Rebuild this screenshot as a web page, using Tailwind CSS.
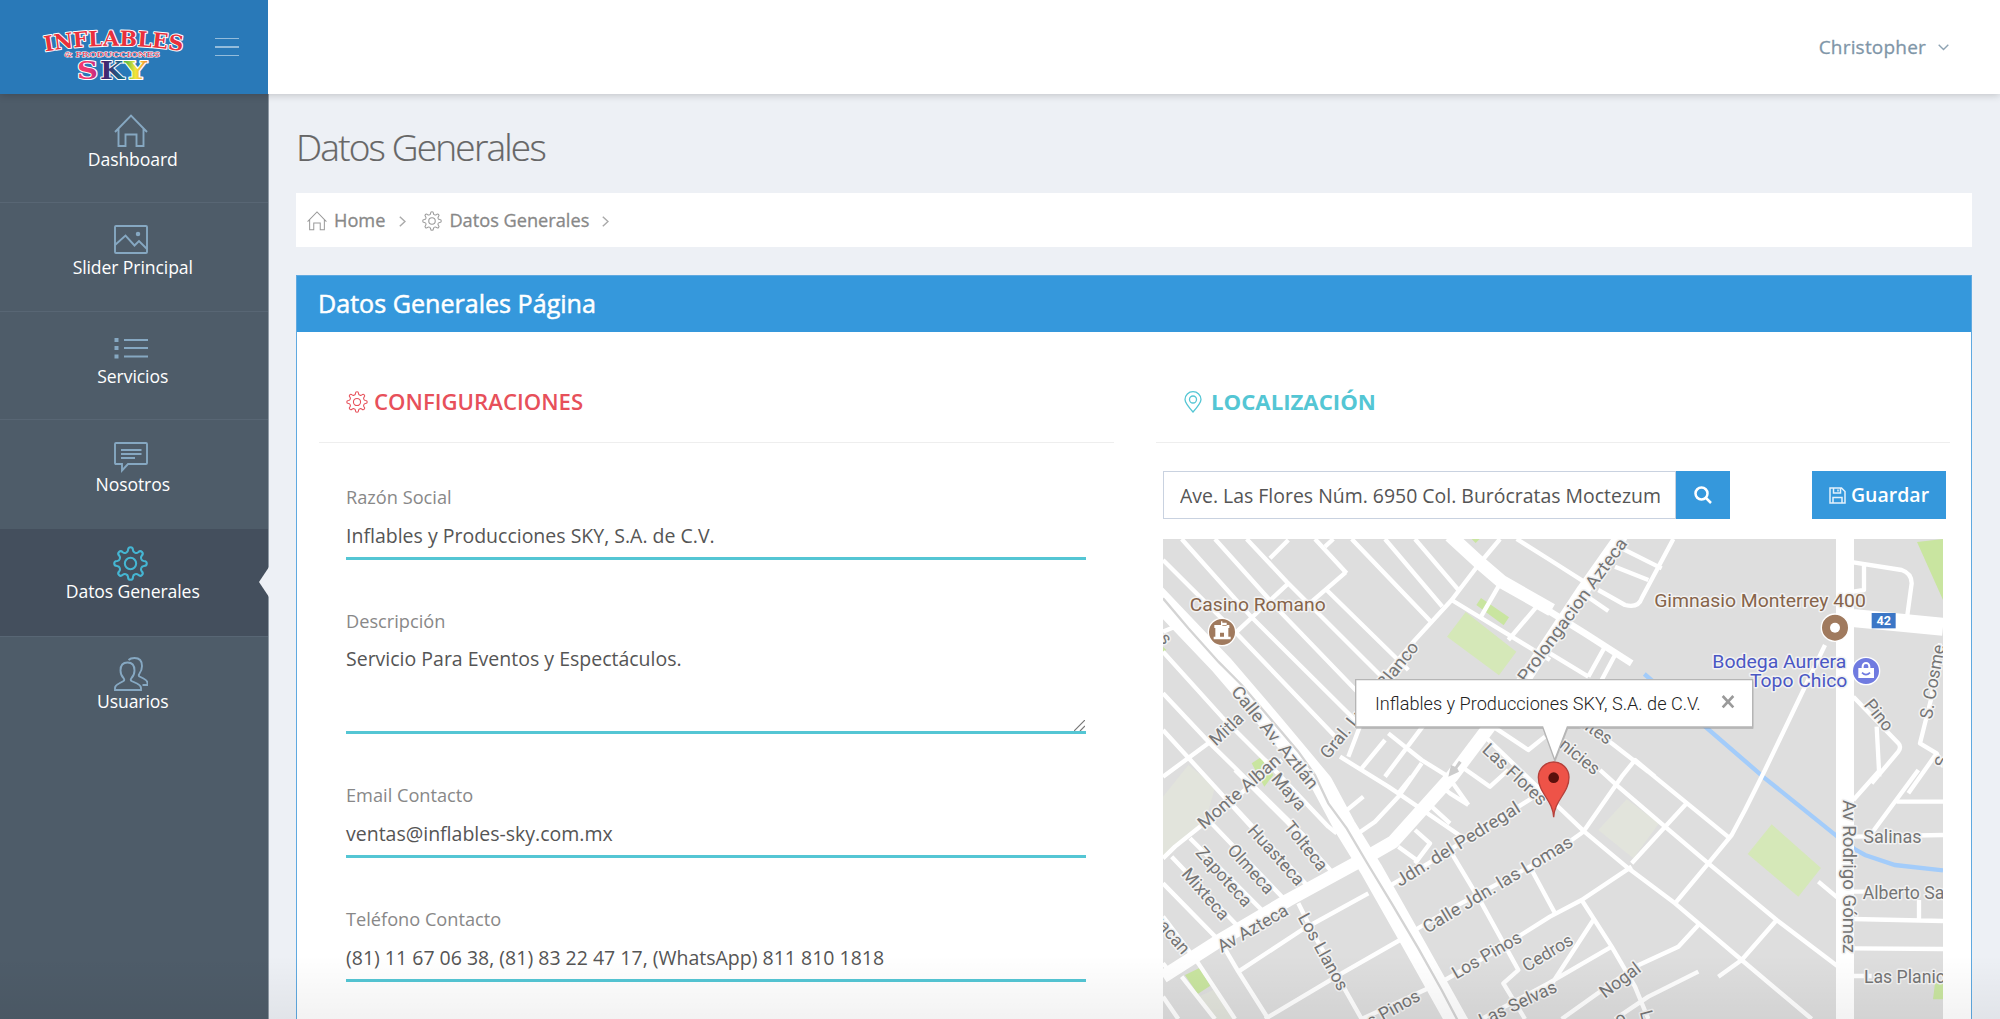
<!DOCTYPE html>
<html lang="es">
<head>
<meta charset="utf-8">
<title>Datos Generales</title>
<script src="https://cdn.jsdelivr.net/npm/@tailwindcss/browser@4"></script>
</head>
<body class="relative h-[1019px] w-[2000px] overflow-hidden bg-[#edf0f5] font-['Open_Sans',sans-serif]">
<svg class="hidden">
  <defs>
    <path id="tooth" d="M-4.32-10.44C-3.2-10.9-2.5-11.8-2.4-13C-2.4-15-1.5-15.8 0-15.8C1.5-15.8 2.4-15 2.4-13C2.5-11.8 3.2-10.9 4.32-10.44"/>
    <symbol id="gear" viewBox="-17 -17 34 34">
      <use href="#tooth"/><use href="#tooth" transform="rotate(45)"/><use href="#tooth" transform="rotate(90)"/><use href="#tooth" transform="rotate(135)"/><use href="#tooth" transform="rotate(180)"/><use href="#tooth" transform="rotate(225)"/><use href="#tooth" transform="rotate(270)"/><use href="#tooth" transform="rotate(315)"/>
      <circle r="5.5"/>
    </symbol>
    <symbol id="home" viewBox="0 0 34 34">
      <path d="M1 18 17 1.5 33 18M4.5 15v17h7V20.500h11V32h7V15"/>
    </symbol>
  </defs>
</svg>

<header class="relative z-10 flex h-[94px] bg-white shadow-[0_1px_8px_rgba(0,0,0,0.2)]">
  <div class="flex w-[268px] items-center bg-[#2979b8]">
    <svg class="ml-[40px] h-[70px] w-[150px]" viewBox="40 12 150 70" font-family="'DejaVu Serif','Liberation Serif',serif" font-weight="700" paint-order="stroke" stroke-linejoin="round">
      <defs>
        <path id="arc" d="M45 51.500Q113 40 184 51.500"/>
        <linearGradient id="gs"><stop offset=".5" stop-color="#f0386f"/><stop offset="1" stop-color="#b92a86"/></linearGradient>
        <linearGradient id="gk"><stop offset=".2" stop-color="#43246f"/><stop offset="1" stop-color="#127a8c"/></linearGradient>
        <linearGradient id="gy"><stop offset=".1" stop-color="#4cb648"/><stop offset=".5" stop-color="#f3e63a"/><stop offset="1" stop-color="#f28a35"/></linearGradient>
      </defs>
      <text font-size="21" fill="#e8303c" stroke="#fff" stroke-width="2"><textPath href="#arc" textLength="138" lengthAdjust="spacingAndGlyphs">INFLABLES</textPath></text>
      <text x="64" y="57" font-size="8" textLength="96" lengthAdjust="spacingAndGlyphs" fill="#e0304f" font-weight="400" stroke="#fff" stroke-width="1">&amp; PRODUCCIONES</text>
      <g font-size="24.500" stroke="#fff" stroke-width="2">
        <text x="77" y="79" textLength="21" lengthAdjust="spacingAndGlyphs" fill="url(#gs)">S</text>
        <text x="100" y="79" textLength="24" lengthAdjust="spacingAndGlyphs" fill="url(#gk)">K</text>
        <text x="124" y="79" textLength="23" lengthAdjust="spacingAndGlyphs" fill="url(#gy)">Y</text>
      </g>
    </svg>
    <div class="ml-[25px] flex w-[24px] flex-col gap-[7px]">
      <i class="h-[1.5px] bg-[#93bcdb]"></i><i class="h-[1.5px] bg-[#93bcdb]"></i><i class="h-[1.5px] bg-[#93bcdb]"></i>
    </div>
  </div>
  <div class="flex flex-1 items-center justify-end gap-3 pr-[51px] text-[19px] tracking-[0.2px] text-[#7f96a8] [-webkit-text-stroke:0.3px]">
    <span>Christopher</span>
    <svg class="h-[7px] w-[11px]" viewBox="0 0 11 7" fill="none" stroke="#8ea3b3" stroke-width="1.400"><path d="M.7.7 5.500 5.500 10.300.7"/></svg>
  </div>
</header>

<div class="flex h-[925px] overflow-hidden">
  <nav class="w-[268.500px] shrink-0 border-r border-[#8f9aa5] bg-[#4e5c69] pt-[1px] text-[17.6px] leading-[24px] tracking-[-0.1px] text-white">
    <a class="flex h-[108.400px] flex-col items-center border-b border-[#586674] pt-[19px] pr-[2px]">
      <svg class="mr-[4px] h-[34px] w-[34px]" fill="none" stroke="#86a8c2" stroke-width="1.900"><use href="#home"/></svg>
      <span class="mt-[-1px]">Dashboard</span>
    </a>
    <a class="flex h-[108.400px] flex-col items-center border-b border-[#586674] pt-[20px] pr-[2px]">
      <svg class="mr-[4px] h-[34px] w-[34px]" viewBox="0 0 34 34" fill="none" stroke="#86a8c2" stroke-width="1.900"><rect x="1" y="3" width="32" height="27" rx="1"/><path d="M1 22 11.500 12.500 20.500 22.500 25 18l8 8"/><circle cx="24" cy="11" r="1.300" fill="#86a8c2"/></svg>
      <span class="mt-[-2px]">Slider Principal</span>
    </a>
    <a class="flex h-[108.400px] flex-col items-center border-b border-[#586674] pt-[19px] pr-[2px]">
      <svg class="mr-[4px] h-[34px] w-[34px]" viewBox="0 0 34 34" fill="none" stroke="#86a8c2"><path stroke-width="4" d="M.5 9h4M.5 17h4M.5 25.500h4"/><path stroke-width="2" d="M10 9h24M10 17h24M10 25.500h24"/></svg>
      <span class="mt-[-1px]">Servicios</span>
    </a>
    <a class="flex h-[108.400px] flex-col items-center pt-[20px] pr-[2px]">
      <svg class="mr-[4px] h-[34px] w-[34px]" viewBox="0 0 34 34" fill="none" stroke="#86a8c2" stroke-width="1.900"><path d="M2 3h30q1 0 1 1v19q0 1-1 1H14L8 30.500V24H2q-1 0-1-1V4q0-1 1-1zM7 10h20.500M7 14h20.500M7 18h14"/></svg>
      <span class="mt-[-2px]">Nosotros</span>
    </a>
    <a class="relative flex h-[108.400px] flex-col items-center border-b border-[#586674] bg-[#444f5d] pt-[17px] pr-[2px]">
      <svg class="mr-[4px] h-[35px] w-[35px]" fill="none" stroke="#45b6d3" stroke-width="2"><use href="#gear"/></svg>
      <span class="mt-[-2px]">Datos Generales</span>
      <svg class="absolute top-[38px] right-[-1px] h-[30px] w-[10px]" viewBox="0 0 10 30" fill="#edf0f5"><path d="M10 0v30L0 15z"/></svg>
    </a>
    <a class="flex h-[108.400px] flex-col items-center pt-[20px] pr-[2px]">
      <svg class="mr-[4px] h-[34px] w-[34px]" viewBox="0 0 34 34" fill="none" stroke="#86a8c2" stroke-width="1.900"><path d="M1 33v-2q0-2.500 4-4.500l4.500-2.500q1.500-1 0-3Q6.500 18 6.500 13.500q0-8 7-8t7 8q0 4.500-3 7.500-1.500 2 0 3l5.500 2.500q4 2 4 4.500v2zM14.500 3q2-2 6-2 7.500 0 7.500 8 0 4-2.500 7.500-1.500 2 0 3l4 2q4 2 4 4.500v2h-5"/></svg>
      <span class="mt-[-2px]">Usuarios</span>
    </a>
  </nav>

  <main class="w-[1704px] shrink-0 overflow-hidden pt-[32px] pl-[27.500px]">
    <h1 class="h-[67px] text-[37px] leading-[42px] font-light tracking-[-1.8px] text-[#666] [-webkit-text-stroke:0.2px]">Datos Generales</h1>
    <div class="flex h-[54px] w-[1676px] items-center bg-white pt-[2px] pl-[11px] text-[18.2px] text-[#888]">
      <svg class="h-[20px] w-[20px]" fill="none" stroke="#999" stroke-width="1.700"><use href="#home"/></svg>
      <span class="ml-[7px] [-webkit-text-stroke:0.3px]">Home</span>
      <svg class="ml-[14px] h-[11px] w-[7px]" viewBox="0 0 7 11" fill="none" stroke="#aaa" stroke-width="1.500"><path d="M.8.8 6 5.500.8 10.200"/></svg>
      <svg class="ml-[16px] h-[20px] w-[20px]" fill="none" stroke="#999" stroke-width="1.800"><use href="#gear"/></svg>
      <span class="ml-[7px] [-webkit-text-stroke:0.3px]">Datos Generales</span>
      <svg class="ml-[13px] h-[11px] w-[7px]" viewBox="0 0 7 11" fill="none" stroke="#aaa" stroke-width="1.500"><path d="M.8.8 6 5.500.8 10.200"/></svg>
    </div>

    <section class="mt-[28px] h-[744px] w-[1676px] border border-b-0 border-[#5fa9e0] bg-white">
      <h2 class="flex h-[56px] items-center bg-[#3598dc] pl-[21px] text-[25.1px] text-white [-webkit-text-stroke:0.5px]">Datos Generales Página</h2>
      <div class="flex px-[21px]">
        <div class="ml-[1px] w-[795px]">
          <div class="flex h-[111px] items-center border-b border-[#eee] pt-[29px] pl-[27px] text-[22.2px] font-semibold text-[#e7505a]">
            <svg class="mr-[6px] h-[22px] w-[22px]" fill="none" stroke="#e7505a" stroke-width="1.700"><use href="#gear"/></svg><span>CONFIGURACIONES</span>
          </div>
          <div class="flex flex-col pt-[43px] pl-[27px] text-[18.200px] text-[#888]">
            <label class="h-[24px] leading-[23px]">Razón Social</label>
            <div class="h-[50px] w-[740px] border-b-[3px] border-[#54c6d4] text-[19.500px] leading-[51px] text-[#555]">Inflables y Producciones SKY, S.A. de C.V.</div>
            <label class="mt-[50px] h-[24px] leading-[23px]">Descripción</label>
            <div class="relative h-[100px] w-[740px] border-b-[3px] border-[#54c6d4] text-[19.500px] leading-[49px] text-[#555]">Servicio Para Eventos y Espectáculos.
              <svg class="absolute right-[1px] bottom-0 h-[11px] w-[11px]" viewBox="0 0 11 11" stroke="#777" stroke-width="1.200"><path d="M0 11 11 0M6 11l5-5"/></svg>
            </div>
            <label class="mt-[49px] h-[24px] leading-[24px]">Email Contacto</label>
            <div class="h-[51px] w-[740px] border-b-[3px] border-[#54c6d4] text-[19.500px] leading-[53px] text-[#555]">ventas@inflables-sky.com.mx</div>
            <label class="mt-[49px] h-[24px] leading-[24px]">Teléfono Contacto</label>
            <div class="h-[51px] w-[740px] border-b-[3px] border-[#54c6d4] text-[19.500px] leading-[53px] text-[#555]">(81) 11 67 06 38, (81) 83 22 47 17, (WhatsApp) 811 810 1818</div>
          </div>
        </div>

        <div class="ml-[42px] w-[794px]">
          <div class="flex h-[111px] items-center border-b border-[#eee] pt-[29px] pl-[28px] text-[22.2px] font-bold text-[#54c6d4]">
            <svg class="mr-[9px] h-[22px] w-[18px]" viewBox="0 0 18 22" fill="none" stroke="#54c6d4" stroke-width="1.300"><path d="M9 21Q1 12 1 8.500a8 7.800 0 0 1 16 0Q17 12 9 21z"/><circle cx="9" cy="8.500" r="3.500"/></svg><span>LOCALIZACIÓN</span>
          </div>
          <div class="mt-[28px] ml-[7px] flex h-[48px]">
            <div class="w-[513px] overflow-hidden border border-[#c9d2e0] pl-[16px]"><div class="w-[480px] overflow-hidden text-[19.450px] leading-[48px] whitespace-nowrap text-[#555]">Ave. Las Flores Núm. 6950 Col. Burócratas Moctezuma</div></div>
            <button class="flex w-[54px] items-center justify-center bg-[#3598dc]">
              <svg class="h-[18px] w-[18px]" viewBox="0 0 18 18" fill="none" stroke="#fff" stroke-width="2.500"><circle cx="7.500" cy="7.500" r="6"/><path d="m12 12 5 5"/></svg>
            </button>
            <button class="ml-[82px] flex w-[134px] items-center justify-center gap-[5px] bg-[#3598dc] text-[19.500px] font-semibold text-white">
              <svg class="h-[17px] w-[17px]" viewBox="0 0 17 17" fill="none" stroke="#e4f1fb" stroke-width="1.500"><path d="M1 1h11.500L16 4.500V16H1zM4.500 1v5h7V1M4 16v-5.500h9V16M9 2.500v2"/></svg><span>Guardar</span>
            </button>
          </div>

          <!-- street map, three drawing units per pixel -->
          <svg class="mt-[20px] ml-[7px] h-[480px] w-[780px] bg-[#dedede]" viewBox="24 27 2340 1440" font-family="Roboto,sans-serif">
            <g fill="#d5e8b8">
              <path d="M932 246 1084 365 1032 436 876 320zM1850 883 1998 1014 1930 1100 1778 972z"/>
              <path fill="#c9e5a0" d="M978 204 1062 262 1046 286 964 225zM2286 36 2364 27V210zM290 700 320 680 355 735 328 770zM90 1335 135 1313 166 1367 128 1392zM2340 1360h24v48h-30zM950 27h24l-12 12zM24 350l10 10-10 6z"/>
              <path fill="#e2e4dc" d="M24 800 100 705 180 770 150 880 24 985zM1415 808 1512 880 1435 985 1330 900zM130 1400 175 1380 240 1467H185z"/>
            </g>
            <path d="M1468 432 1830 745 2050 922 2100 958 2130 975 2220 1005 2364 1021" fill="none" stroke="#a3ccfa" stroke-width="13"/>
            <g fill="none" stroke="#fff" stroke-width="13" stroke-linejoin="round">
              <path d="M24 90 240 305 560 640M80 27 290 262 610 580M180 27 380 250 640 520M275 27 395 155 500 260 690 450M480 27 575 130M515 180 760 420M590 27 825 272M690 27 862 230M780 27 912 182"/>
              <path d="M240 310 400 160M345 85 400 30M470 215 572 127M510 50 535 27M1035 27 970 105 890 210 780 330 660 470 580 680"/>
              <path d="M24 365 200 560 355 715M24 490 165 640 460 930M24 600 330 935M24 740 160 640M24 305 60 290"/>
              <path d="M24 985 60 950 160 870 380 690M160 870 390 1110M210 800 460 1070M240 720 400 880 535 1030M330 690 520 890 545 910M105 925 330 1150M50 980 250 1190M24 1060 200 1240 250 1325 340 1467M24 1160 130 1300 240 1467M80 1340 180 1467M24 1400 70 1467M24 1300 40 1320"/>
              <path d="M890 210 1185 390M1030 170 975 265M1145 230 1060 330M1085 27 1185 90 1295 160M1380 45 1520 115M1555 27 1460 205Q1450 235 1410 225L1330 180M1380 110 1480 150M1290 195 1360 243M1185 370 1300 440M1350 350 1300 440M1380 375 1340 450"/>
              <path d="M555 680 700 770 730 790 920 920M700 610 800 690 880 740 940 825M690 630 620 715M810 580 690 740M800 700 730 800 660 875 610 910M570 845 625 800M730 790 770 740M860 770 885 790 940 825M830 830 885 880M780 900 825 940 780 1000M730 950 785 990M920 710 1005 770 1060 720M1000 580 1120 660 1170 620"/>
              <path d="M990 620 1220 840 1288 905 1420 1015 1560 1120 1760 1290 1970 1467M1335 720 1390 770 1530 890 1660 1000 1865 1170 2050 1310M1250 540 1370 640 1480 725 1725 925M1500 740 1440 690 1400 740 1285 905M1595 820 1430 1000M1830 720 1770 840 1730 915 1660 1000 1560 1120M1830 720 2010 345M1865 1170 1760 1290 1690 1340M1990 1055 2050 1105"/>
              <path d="M700 1070 820 1000 1130 805M780 1200 900 1130 1180 980 1285 905M870 1350 1010 1270 1185 1160 1280 1110 1430 1010M890 970 980 1120 1090 1320 1045 1360 1110 1467M1130 1020 1200 1150M1280 1110 1370 1250 1440 1370 1480 1467M1185 1370 1315 1170M980 1467 1180 1360 1370 1250M1220 1467 1440 1310 1570 1250 1630 1185M1380 1467 1480 1400 1630 1325"/>
              <path d="M250 1325 440 1200 640 1090M330 1467 560 1330 735 1230M430 1120 480 1220 620 1467M620 1467 820 1375"/>
              <path d="M2095 97 2240 120Q2270 130 2270 160L2255 270M2127 97V180L2095 185M2355 340 2330 500 2295 640 2345 670 2260 790M2345 670 2364 710M2095 500 2230 640Q2240 650 2230 665L2150 760M2165 590 2173 740M2095 810 2175 720M2290 720 2150 910M2225 815H2364M2095 920 2364 915M2095 1085H2150M2095 1167 2364 1173M2292 1170V1110M2095 1255 2364 1257M2095 1338H2150"/>
              <path stroke-width="40" d="M885 17 970 95 1040 155 1190 240M1400 17 1285 180 1100 460 980 620 890 740 715 935 620 990 400 1110 180 1240 24 1340"/>
              <path stroke-width="20" d="M1185 245 1290 310 1430 400"/>
              <path stroke-width="54" d="M2070 17V1470M2070 262 2364 290"/>
              <path stroke-width="66" d="M0 195 100 300 200 405 350 580 450 700 500 760 570 890 650 1020 780 1250 920 1500"/>
            </g>
            <path d="M24 205 100 295 190 395 260 465 345 565 430 665 480 735 520 820 575 895 640 1005 710 1120 790 1255 860 1380 910 1475" fill="none" stroke="#d4d4d4" stroke-width="7"/>
            <path d="M880 740l8-35 12 5 12-18 8 6-13 17 5 10z" fill="#ccc"/>

            <g font-size="53" fill="#757575" stroke="#f2f2f2" stroke-width="9" paint-order="stroke" stroke-linejoin="round" text-anchor="middle" dominant-baseline="central">
              <text transform="translate(32 325)rotate(50)">s</text>
              <text transform="translate(360 622)rotate(51)" textLength="380" lengthAdjust="spacingAndGlyphs">Calle Av. Aztlán</text>
              <text transform="translate(214 597)rotate(-43)">Mitla</text>
              <text transform="translate(252 785)rotate(-41)" textLength="310" lengthAdjust="spacingAndGlyphs">Monte Alban</text>
              <text transform="translate(402 785)rotate(49)">Maya</text>
              <text transform="translate(453 948)rotate(51)">Tolteca</text>
              <text transform="translate(364 975)rotate(48)">Huasteca</text>
              <text transform="translate(288 1017)rotate(48)">Olmeca</text>
              <text transform="translate(207 1040)rotate(48)">Zapoteca</text>
              <text transform="translate(152 1092)rotate(49)">Mixteca</text>
              <text transform="translate(48 1210)rotate(49)">uacan</text>
              <text transform="translate(293 1195)rotate(-30)">Av Azteca</text>
              <text transform="translate(505 1265)rotate(61)">Los Llanos</text>
              <text transform="translate(715 1435)rotate(-29)">s Pinos</text>
              <text transform="translate(643 510)rotate(-51)" textLength="435" lengthAdjust="spacingAndGlyphs">Gral. Lucio Blanco</text>
              <text transform="translate(1252 240)rotate(-54)" textLength="520" lengthAdjust="spacingAndGlyphs">Prolongacion Azteca</text>
              <text transform="translate(1080 733)rotate(43)">Las Flores</text>
              <text transform="translate(1325 602)rotate(35)">ntes</text>
              <text transform="translate(1275 680)rotate(39)">nicies</text>
              <text transform="translate(908 942)rotate(-32)" textLength="430" lengthAdjust="spacingAndGlyphs">Jdn. del Pedregal</text>
              <text transform="translate(1028 1063)rotate(-31)" textLength="515" lengthAdjust="spacingAndGlyphs">Calle Jdn. las Lomas</text>
              <text transform="translate(995 1275)rotate(-30)">Los Pinos</text>
              <text transform="translate(1178 1268)rotate(-31)">Cedros</text>
              <text transform="translate(1088 1420)rotate(-25)">Las Selvas</text>
              <text transform="translate(1395 1350)rotate(-37)">Nogal</text>
              <text transform="translate(1395 1465)rotate(-30)">o</text>
              <text transform="translate(1475 1455)rotate(75)">L</text>
              <text transform="translate(2172 555)rotate(51)">Pino</text>
              <text transform="translate(2332 455)rotate(-80)">S. Cosme</text>
              <text transform="translate(2360 695)rotate(-80)">S</text>
              <text transform="translate(2081 1040)rotate(90)" textLength="460" lengthAdjust="spacingAndGlyphs">Av Rodrigo Gómez</text>
              <g text-anchor="start">
                <text x="2125" y="920" textLength="175" lengthAdjust="spacingAndGlyphs">Salinas</text>
                <text x="2123" y="1088">Alberto Salinas</text>
                <text x="2127" y="1340">Las Planicies</text>
              </g>
              <g fill="#86644a" font-size="56">
                <text x="308" y="225" textLength="408" lengthAdjust="spacingAndGlyphs">Casino Romano</text>
                <text x="1815" y="212" textLength="635" lengthAdjust="spacingAndGlyphs">Gimnasio Monterrey 400</text>
              </g>
              <g fill="#4a57c4" font-size="56">
                <text x="1873" y="396" textLength="402" lengthAdjust="spacingAndGlyphs">Bodega Aurrera</text>
                <text x="1931" y="454" textLength="292" lengthAdjust="spacingAndGlyphs">Topo Chico</text>
              </g>
            </g>
            <g stroke="#fff" stroke-width="4">
              <circle cx="201" cy="306" r="41" fill="#a07a5e"/><circle cx="2040" cy="293" r="41" fill="#a07a5e"/><circle cx="2133" cy="423" r="41" fill="#707be0"/>
            </g>
            <path fill-rule="evenodd" d="M176 328v-8h5v-26h-3v-9h20v-11h4v4h13v9h-13v-2h21v9h-3v26h7v8zM195 308v12h12v-12z" fill="#fff"/>
            <circle cx="2040" cy="293" r="15" fill="#fff"/>
            <path d="M2110 414h47v30h-47z" fill="#fff"/><path d="M2123 414v-5a10 10 0 0 1 20 0v5" fill="none" stroke="#fff" stroke-width="6"/><path d="M2121 428q12 12 24 0" fill="none" stroke="#707be0" stroke-width="5"/>
            <path d="M2150 249h72v46h-72z" fill="#3b76c6"/><text x="2186" y="286" font-size="38" font-weight="700" fill="#fff" text-anchor="middle">42</text>

            <g>
              <path d="M602 449H1793V591H1237L1199 690 1163 591H602z" fill="#777" opacity=".35" transform="translate(2 6)"/>
              <path d="M602 449H1793V591H1237L1199 690 1163 591H602z" fill="#fff" stroke="#b5b5b5" stroke-width="4"/>
              <text x="660" y="541" font-size="54" font-weight="300" fill="#222" textLength="977" lengthAdjust="spacingAndGlyphs">Inflables y Producciones SKY, S.A. de C.V.</text>
              <path d="m1703 498 32 34m0-34-32 34" stroke="#9a9a9a" stroke-width="8"/>
              <path d="M1196 862C1194 810 1150 790 1150 742a46 46 0 0 1 92 0C1242 790 1198 810 1196 862z" fill="#ee5348" stroke="#b5403a" stroke-width="4"/>
              <circle cx="1196" cy="743" r="16" fill="#5a100c"/>
            </g>
          </svg>
        </div>
      </div>
    </section>
  </main>
</div>
<div class="pointer-events-none absolute inset-x-0 bottom-0 z-20 h-[64px] bg-linear-to-b from-black/0 to-black/5"></div>
</body>
</html>
